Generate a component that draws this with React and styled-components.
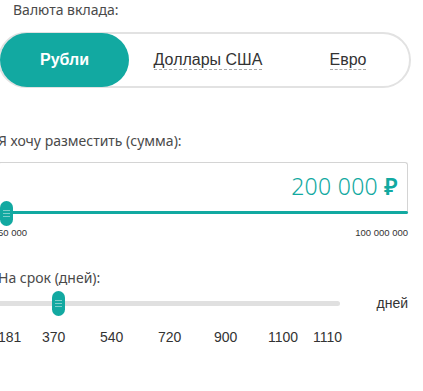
import React from 'react';
import styled, { createGlobalStyle } from 'styled-components';

const TEAL = '#12a9a1';

const GlobalStyle = createGlobalStyle`
  html, body {
    margin: 0;
    padding: 0;
    background: #fff;
  }
  body {
    font-family: "Noto Sans", "Open Sans", Arial, sans-serif;
    color: #3a3a3a;
  }
`;

const Page = styled.div`
  width: 423px;
  height: 391px;
  margin-left: -2px;
  overflow: hidden;
`;

const Caption = styled.div`
  font-size: 14px;
  line-height: 20px;
  color: #4a4a4a;
  padding-left: ${p => p.$indent || 0}px;
`;

const Tabs = styled.div`
  display: grid;
  grid-template-columns: 129px 158px 1fr;
  width: 413px;
  height: 56px;
  box-sizing: border-box;
  border: 2px solid #e2e2e2;
  border-radius: 28px;
  margin-top: 12px;
`;

const Tab = styled.div`
  display: flex;
  align-items: center;
  justify-content: center;
  margin: -1px 0;
  border-radius: 27px;
  background: ${p => (p.$active ? TEAL : 'transparent')};
  color: ${p => (p.$active ? '#fff' : '#333')};
  font-family: "Liberation Sans", Arial, sans-serif;
  font-size: 16px;
  font-weight: ${p => (p.$active ? 700 : 400)};
`;

const TabLabel = styled.span`
  line-height: 18px;
  border-bottom: ${p => (p.$active ? 'none' : '1px dashed #aaa')};
`;

const Section = styled.div`
  margin-top: ${p => p.$top}px;
`;

const AmountBox = styled.div`
  position: relative;
  width: 410px;
  height: 50px;
  box-sizing: border-box;
  border: 1px solid #d4d4d4;
  border-bottom: none;
  border-radius: 3px 3px 0 0;
  display: flex;
  align-items: center;
  justify-content: flex-end;
  padding: 0 9px 4px 0;
  margin-top: 11px;
`;

const AmountValue = styled.span`
  color: ${TEAL};
  font-size: 23px;
  font-weight: 300;
  letter-spacing: 0.3px;
`;

const Ruble = styled.span`
  font-weight: 600;
  margin-left: 6px;
`;

const AmountTrack = styled.div`
  position: absolute;
  left: 0;
  right: -1px;
  bottom: -2px;
  height: 3px;
  background: ${TEAL};
  border-radius: 2px;
`;

const Thumb = styled.div`
  position: absolute;
  top: ${p => p.$top}px;
  left: ${p => p.$left}px;
  width: 13px;
  height: 25px;
  border-radius: 7px;
  background: ${TEAL};
  &::after {
    content: '';
    position: absolute;
    left: 3px;
    right: 3px;
    top: 9px;
    height: 7px;
    background: repeating-linear-gradient(
      to bottom,
      rgba(255, 255, 255, 0.45) 0 1px,
      transparent 1px 3px
    );
  }
`;

const Limits = styled.div`
  display: flex;
  justify-content: space-between;
  width: 410px;
  margin-top: 15px;
  font-family: "Liberation Sans", Arial, sans-serif;
  font-size: 9.5px;
  color: #333;
`;

const TermRow = styled.div`
  display: flex;
  align-items: center;
  width: 410px;
  margin-top: 7px;
`;

const TermTrack = styled.div`
  position: relative;
  width: 342px;
  height: 5px;
  background: #e0e0e0;
  border-radius: 3px;
`;

const Unit = styled.span`
  margin-left: auto;
  font-family: "Liberation Sans", Arial, sans-serif;
  font-size: 14px;
  color: #333;
`;

const Ticks = styled.div`
  display: grid;
  grid-template-columns: 44px 58px 58px 56px 54px 45px auto;
  margin-top: 18px;
  font-family: "Liberation Sans", Arial, sans-serif;
  font-size: 14px;
  color: #333;
`;

const Tick = styled.span``;

const currencies = ['Рубли', 'Доллары США', 'Евро'];
const ticks = ['181', '370', '540', '720', '900', '1100', '1110'];

export default function App() {
  return (
    <Page>
      <GlobalStyle />
      <Caption $indent={15}>Валюта вклада:</Caption>
      <Tabs>
        {currencies.map((c, i) => (
          <Tab key={c} $active={i === 0}>
            <TabLabel $active={i === 0}>{c}</TabLabel>
          </Tab>
        ))}
      </Tabs>

      <Section $top={43}>
        <Caption>Я хочу разместить (сумма):</Caption>
        <AmountBox>
          <AmountValue>
            200 000<Ruble>₽</Ruble>
          </AmountValue>
          <AmountTrack />
          <Thumb $top={38} $left={1} />
        </AmountBox>
        <Limits>
          <span>50 000</span>
          <span>100 000 000</span>
        </Limits>
      </Section>

      <Section $top={30}>
        <Caption>На срок (дней):</Caption>
        <TermRow>
          <TermTrack>
            <Thumb $top={-10} $left={54} />
          </TermTrack>
          <Unit>дней</Unit>
        </TermRow>
        <Ticks>
          {ticks.map(t => (
            <Tick key={t}>{t}</Tick>
          ))}
        </Ticks>
      </Section>
    </Page>
  );
}
